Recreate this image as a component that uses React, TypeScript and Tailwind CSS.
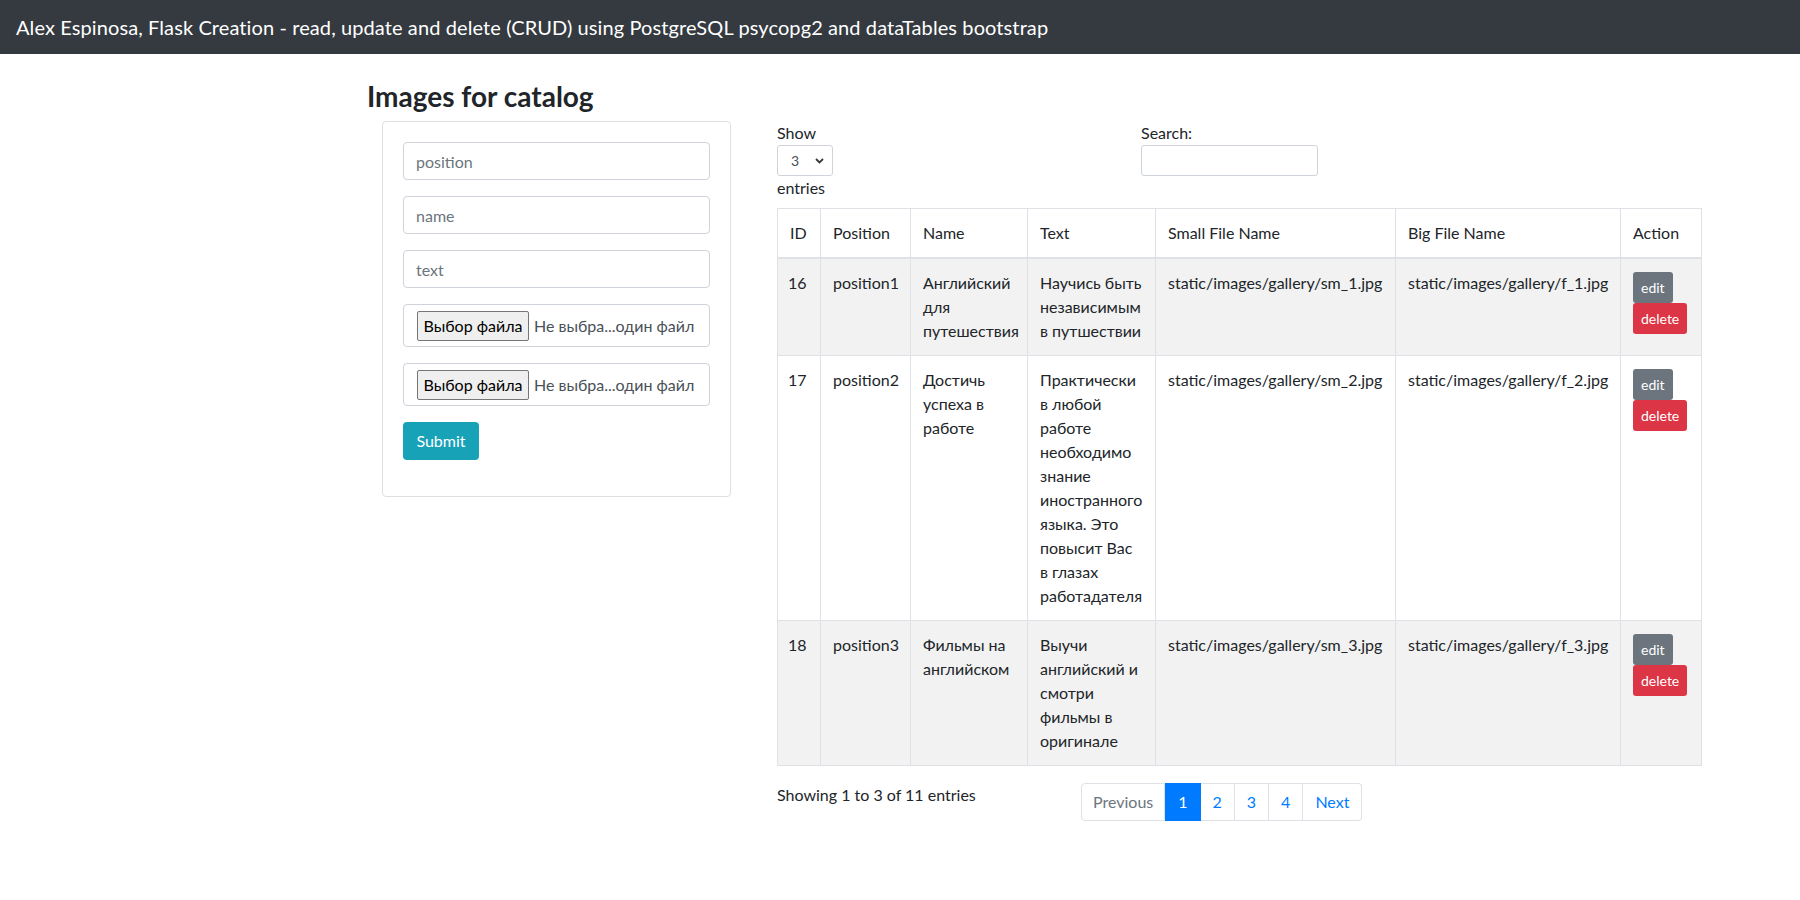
import React from 'react'

const font = { fontFamily: 'Lato, "Noto Sans", sans-serif' }

interface Row {
  id: number
  position: string
  name: string[]
  text: string[]
  small: string
  big: string
}

const rows: Row[] = [
  {
    id: 16,
    position: 'position1',
    name: ['Английский', 'для', 'путешествия'],
    text: ['Научись быть', 'независимым', 'в путшествии'],
    small: 'static/images/gallery/sm_1.jpg',
    big: 'static/images/gallery/f_1.jpg',
  },
  {
    id: 17,
    position: 'position2',
    name: ['Достичь', 'успеха в', 'работе'],
    text: [
      'Практически',
      'в любой',
      'работе',
      'необходимо',
      'знание',
      'иностранного',
      'языка. Это',
      'повысит Вас',
      'в глазах',
      'работадателя',
    ],
    small: 'static/images/gallery/sm_2.jpg',
    big: 'static/images/gallery/f_2.jpg',
  },
  {
    id: 18,
    position: 'position3',
    name: ['Фильмы на', 'английском'],
    text: ['Выучи', 'английский и', 'смотри', 'фильмы в', 'оригинале'],
    small: 'static/images/gallery/sm_3.jpg',
    big: 'static/images/gallery/f_3.jpg',
  },
]

function Lines({ lines }: { lines: string[] }) {
  return (
    <>
      {lines.map((l, i) => (
        <div key={i} className="whitespace-nowrap">
          {l}
        </div>
      ))}
    </>
  )
}

function TextInput({ placeholder }: { placeholder: string }) {
  return (
    <input
      placeholder={placeholder}
      className="block w-full h-[38px] px-3 border border-[#ced4da] rounded-[4px] text-base text-[#495057] placeholder:text-[#6c757d] outline-none"
    />
  )
}

function FileInput() {
  return (
    <div className="flex items-center h-[43px] border border-[#ced4da] rounded-[4px] pl-[13px] text-base">
      <span className="flex items-center justify-center w-[112px] h-[30px] bg-[#efefef] border border-[#767676] rounded-[2px] text-black">
        Выбор файла
      </span>
      <span className="ml-[5px] text-[#495057] whitespace-nowrap">
        Не выбра...один файл
      </span>
    </div>
  )
}

export default function App() {
  const cell = 'border border-[#dee2e6] px-3 py-3 align-top'
  return (
    <div className="min-h-screen bg-white text-[#212529] text-base leading-6" style={font}>
      {/* Navbar */}
      <nav className="h-[54px] bg-[#343a40] flex items-center px-4">
        <span className="text-white text-[20px] tracking-[0.1px]">
          Alex Espinosa, Flask Creation - read, update and delete (CRUD) using PostgreSQL psycopg2 and dataTables bootstrap
        </span>
      </nav>

      <h3 className="ml-[367px] mt-[25px] mb-2 text-[28px] leading-[34px] font-bold">
        Images for catalog
      </h3>

      <div className="flex items-start">
        {/* Form card */}
        <div className="ml-[382px] w-[349px] border border-[#dfdfdf] rounded-[4px] px-5 pt-5 pb-9">
          <div className="flex flex-col gap-4">
            <TextInput placeholder="position" />
            <TextInput placeholder="name" />
            <TextInput placeholder="text" />
            <FileInput />
            <FileInput />
          </div>
          <button className="mt-4 w-[76px] h-[38px] bg-[#17a2b8] text-white rounded-[4px] text-base">
            Submit
          </button>
        </div>

        {/* Table side */}
        <div className="ml-[46px] w-[924px]">
          <div className="flex">
            <div className="w-[364px]">
              <div>Show</div>
              <div className="relative w-[56px] h-[31px] border border-[#ced4da] rounded-[3px] text-sm flex items-center pl-[13px] text-[#495057]">
                3
                <svg
                  className="absolute right-[8px] top-[12px]"
                  width="9"
                  height="6"
                  viewBox="0 0 9 6"
                >
                  <path d="M1 1l3.5 3.5L8 1" fill="none" stroke="#343a40" strokeWidth="1.8" />
                </svg>
              </div>
              <div>entries</div>
            </div>
            <div>
              <div>Search:</div>
              <input className="block w-[177px] h-[31px] border border-[#ced4da] rounded-[3px] outline-none" />
            </div>
          </div>

          <table className="mt-2 w-[924px] table-fixed border-collapse border border-[#dee2e6]">
            <colgroup>
              <col className="w-[43px]" />
              <col className="w-[90px]" />
              <col className="w-[117px]" />
              <col className="w-[128px]" />
              <col className="w-[240px]" />
              <col className="w-[225px]" />
              <col className="w-[81px]" />
            </colgroup>
            <thead>
              <tr>
                {['ID', 'Position', 'Name', 'Text', 'Small File Name', 'Big File Name', 'Action'].map((h) => (
                  <th
                    key={h}
                    className="border border-[#dee2e6] border-b-2 px-3 py-3 text-left font-normal align-bottom whitespace-nowrap"
                  >
                    {h}
                  </th>
                ))}
              </tr>
            </thead>
            <tbody>
              {rows.map((r, i) => (
                <tr key={r.id} className={i % 2 === 0 ? 'bg-[#f2f2f2]' : 'bg-white'}>
                  <td className={cell + ' px-[10px]'}>{r.id}</td>
                  <td className={cell}>{r.position}</td>
                  <td className={cell}>
                    <Lines lines={r.name} />
                  </td>
                  <td className={cell}>
                    <Lines lines={r.text} />
                  </td>
                  <td className={cell + ' whitespace-nowrap'}>{r.small}</td>
                  <td className={cell + ' whitespace-nowrap'}>{r.big}</td>
                  <td className={cell + ' pt-[13px]'}>
                    <div className="flex flex-col items-start">
                      <button className="h-[31px] px-2 bg-[#6c757d] text-white text-sm rounded-[3px]">
                        edit
                      </button>
                      <button className="h-[31px] px-2 bg-[#dc3545] text-white text-sm rounded-[3px]">
                        delete
                      </button>
                    </div>
                  </td>
                </tr>
              ))}
            </tbody>
          </table>

          <div className="flex items-start mt-[16px]">
            <div className="w-[304px] pt-[1px]">Showing 1 to 3 of 11 entries</div>
            <div className="flex h-[38px] mt-[1px]">
              <span className="flex items-center px-[11px] border border-[#dee2e6] rounded-l-[4px] text-[#6c757d]">
                Previous
              </span>
              <span className="flex items-center px-3 bg-[#007bff] border border-[#007bff] text-white">1</span>
              {['2', '3', '4'].map((p) => (
                <span key={p} className="flex items-center px-3 border border-[#dee2e6] border-l-0 text-[#007bff]">
                  {p}
                </span>
              ))}
              <span className="flex items-center px-3 border border-[#dee2e6] border-l-0 rounded-r-[4px] text-[#007bff]">
                Next
              </span>
            </div>
          </div>
        </div>
      </div>
    </div>
  )
}
